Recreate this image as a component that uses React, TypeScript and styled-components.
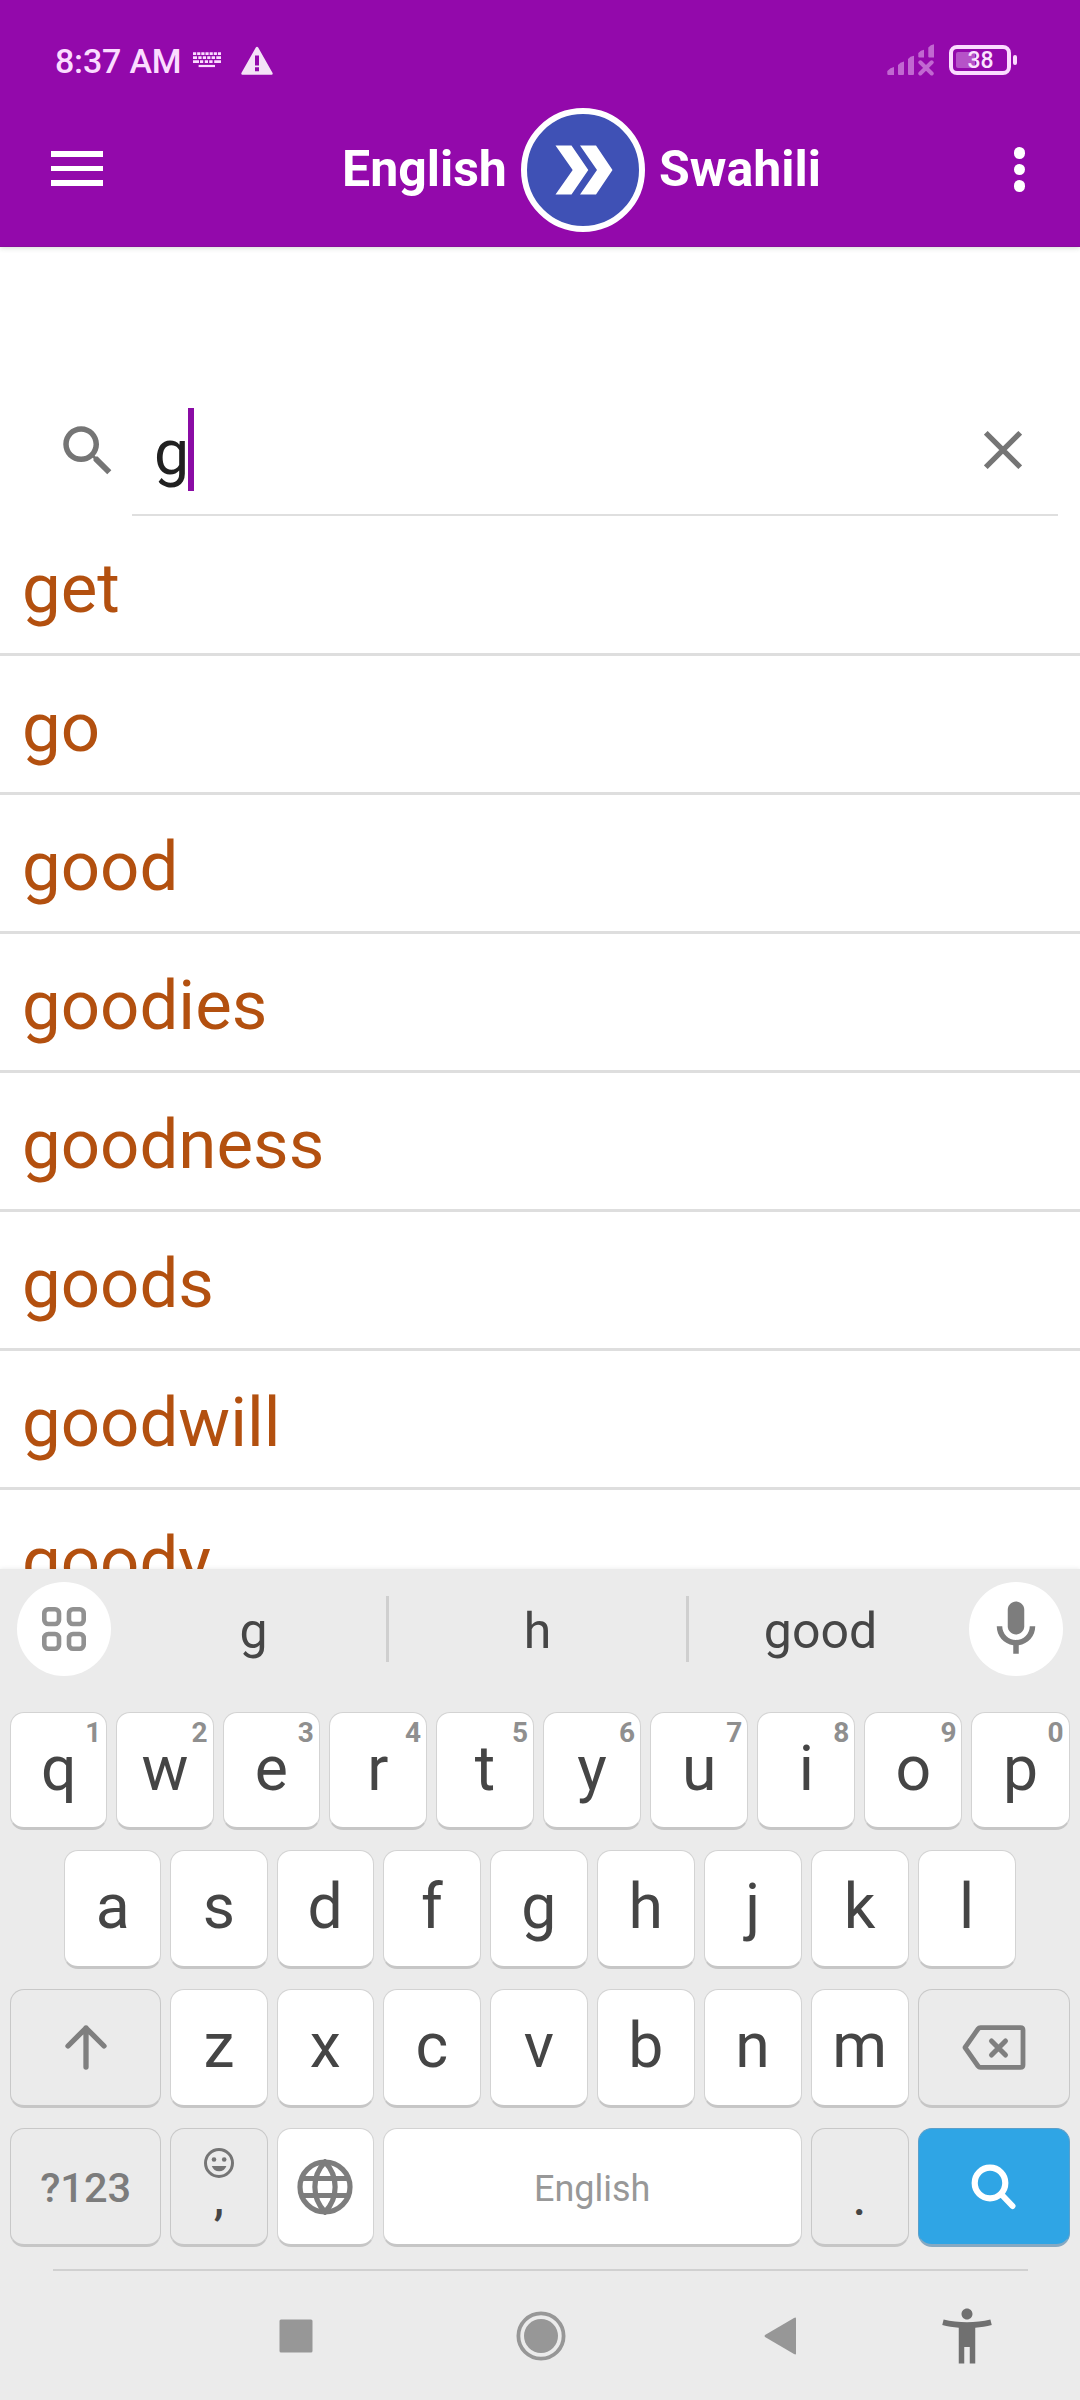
import React from "react";
import styled, { createGlobalStyle } from "styled-components";

const GlobalStyle = createGlobalStyle`
  *, *::before, *::after { box-sizing: border-box; }
  html, body { margin: 0; padding: 0; background: #fff; }
  body { font-family: Roboto, "Liberation Sans", sans-serif; overflow: hidden; }
  svg { display: block; flex: none; }
`;

const Screen = styled.div`
  width: 1080px;
  height: 2400px;
  display: flex;
  flex-direction: column;
  background: #fff;
  overflow: hidden;
`;

const Header = styled.header`
  height: 247px;
  flex: none;
  background: #9309ab;
  border-bottom: 1px solid #870f9b;
  box-shadow: 0 1px 5px rgba(60, 90, 60, 0.22);
  display: flex;
  flex-direction: column;
`;

const StatusBar = styled.div`
  height: 93px;
  padding: 29px 63px 0 55px;
  display: flex;
  align-items: flex-start;
  justify-content: space-between;
`;

const StatusGroup = styled.div`
  height: 62px;
  display: flex;
  align-items: center;
`;

const Clock = styled.span`
  width: 138px;
  padding-top: 2px;
  font-size: 34px;
  font-weight: 500;
  line-height: 62px;
  color: #fbdcff;
  white-space: nowrap;
  letter-spacing: -0.2px;
`;

const BatteryShell = styled.div`
  position: relative;
  width: 62px;
  height: 30px;
  margin-left: 14px;
  border: 4px solid #fbdcff;
  border-radius: 8px;
  padding: 3px;
`;

const BatteryFill = styled.div`
  width: 19px;
  height: 16px;
  border-radius: 2px;
  background: #b653c8;
`;

const BatteryValue = styled.span`
  position: absolute;
  inset: 0;
  padding-left: 1px;
  font-size: 23px;
  font-weight: 500;
  line-height: 24px;
  text-align: center;
  color: #fbe4ff;
`;

const BatteryNub = styled.div`
  width: 4px;
  height: 10px;
  margin-left: 2px;
  border-radius: 2px;
  background: #fbdcff;
`;

const Toolbar = styled.div`
  height: 153px;
  padding: 0 55px 0 51px;
  display: flex;
  align-items: center;
`;

const MenuButton = styled.div`
  width: 290px;
  margin-bottom: 2px;
  display: flex;
  flex-direction: column;
  gap: 9px;
`;

const MenuLine = styled.div`
  width: 52px;
  height: 5.6px;
  background: #fff;
`;

const Direction = styled.div`
  display: flex;
  align-items: center;
  flex: 1;
`;

const Language = styled.span<{ $indent?: number }>`
  width: 180px;
  padding: 0 0 2px ${(p) => p.$indent ?? 0}px;
  font-size: 50px;
  font-weight: 700;
  line-height: 60px;
  color: #fff;
  white-space: nowrap;
`;

const SwapButton = styled.div`
  width: 124px;
  height: 124px;
  margin-right: 14px;
  border: 6px solid #fff;
  border-radius: 50%;
  background: #3f51b5;
  display: flex;
  align-items: center;
  justify-content: center;
`;

const MoreButton = styled.div`
  display: flex;
  flex-direction: column;
  gap: 5px;
`;

const Dot = styled.div`
  width: 11.5px;
  height: 11.5px;
  border-radius: 50%;
  background: #fff;
`;

const Content = styled.main`
  height: 1322px;
  flex: none;
  overflow: hidden;
  display: flex;
  flex-direction: column;
`;

const SearchRow = styled.div`
  flex: none;
  height: 270px;
  padding: 134px 22px 0 55px;
  display: flex;
`;

const SearchIconBox = styled.div`
  width: 77px;
  padding-top: 37px;
`;

const SearchField = styled.div`
  flex: 1;
  height: 135px;
  border-bottom: 2px solid #dfdfdf;
  padding: 27px 36px 0 22px;
  display: flex;
  align-items: flex-start;
`;

const Query = styled.span`
  width: 34px;
  font-size: 62.5px;
  line-height: 90px;
  color: #212121;
`;

const Caret = styled.div`
  width: 6px;
  height: 83px;
  background: #8a0ca5;
`;

const ClearButton = styled.div`
  margin: 23px 0 0 auto;
`;

const WordList = styled.ul`
  list-style: none;
  margin: 0;
  padding: 0;
`;

const Word = styled.li`
  height: 139px;
  padding: 7px 22px 0;
  border-bottom: 3px solid #dedede;
  font-size: 69px;
  line-height: 129px;
  color: #b3500f;
`;

const Keyboard = styled.section`
  position: relative;
  height: 831px;
  flex: none;
  background: #ebebeb;
  box-shadow: 0 0 5px rgba(0, 0, 0, 0.09);
`;

const SuggestionBar = styled.div`
  height: 143px;
  padding: 13px 17px 0 17px;
  display: flex;
  align-items: flex-start;
`;

const RoundButton = styled.div`
  width: 94px;
  height: 94px;
  border-radius: 50%;
  background: #fff;
  display: flex;
  align-items: center;
  justify-content: center;
`;

const Suggestions = styled.div`
  flex: 1;
  height: 94px;
  padding: 0 17px 0 10px;
  display: grid;
  grid-template-columns: 265px 3px 297px 3px 1fr;
  align-items: center;
`;

const Suggestion = styled.span`
  font-size: 50px;
  line-height: 90px;
  padding-top: 4px;
  text-align: center;
  color: #464646;
`;

const Separator = styled.div`
  height: 66px;
  background: #cfcfcf;
`;

const KeyRows = styled.div`
  height: 535px;
  padding: 0 10.5px 0 10px;
  display: grid;
  grid-template-rows: 118px 119px 119px 119px;
  row-gap: 20px;
`;

const KeyRow = styled.div<{ $inset?: boolean }>`
  padding: 0 ${(p) => (p.$inset ? 54 : 0)}px;
  display: flex;
  gap: 9px;
`;

type KeyTone = "light" | "dim" | "accent";

const keyBackground = { light: "#ffffff", dim: "#ebebeb", accent: "#2fa5e5" };
const keyEdge = { light: "#d3d3d3", dim: "#c8c8c8", accent: "#5b9fca" };
const keyBottom = { light: "#c6c6c6", dim: "#c6c6c6", accent: "#86a9c2" };

const KeyCap = styled.div<{ $tone?: KeyTone; $width?: number }>`
  position: relative;
  ${(p) => (p.$width ? `flex: none; width: ${p.$width}px;` : "flex: 1 1 0; min-width: 0;")}
  border: 1px solid ${(p) => keyEdge[p.$tone ?? "light"]};
  border-bottom: 3px solid ${(p) => keyBottom[p.$tone ?? "light"]};
  border-radius: 14px;
  background: ${(p) => keyBackground[p.$tone ?? "light"]};
  display: flex;
  align-items: center;
  justify-content: center;
`;

const Letter = styled.span`
  font-size: 62.5px;
  line-height: 110px;
  padding-bottom: 3px;
  color: #454545;
`;

const Hint = styled.span`
  position: absolute;
  top: 4px;
  right: 5px;
  font-size: 28px;
  font-weight: 700;
  line-height: 32px;
  color: #8f8f8f;
`;

const SymbolLabel = styled.span`
  font-size: 41.5px;
  font-weight: 500;
  line-height: 110px;
  padding-top: 2px;
  color: #7c7c7c;
`;

const SpaceLabel = styled.span`
  font-size: 36px;
  line-height: 110px;
  padding-top: 4px;
  color: #989898;
`;

const EmojiStack = styled.div`
  align-self: stretch;
  display: flex;
  flex-direction: column;
  align-items: center;
  padding-top: 18px;
`;

const Punctuation = styled.span<{ $top: number }>`
  height: 36px;
  margin-top: ${(p) => p.$top}px;
  font-size: 46px;
  font-weight: 500;
  line-height: 36px;
  color: #454545;
`;

const NavBar = styled.nav`
  margin: 22px 52px 0 53px;
  height: 131px;
  border-top: 2px solid #d0d0d0;
`;

const NavItems = styled.div`
  height: 129px;
  padding: 0 0 0 226px;
  display: flex;
  align-items: center;
`;

const NavSlot = styled.div<{ $width: number }>`
  flex: none;
  width: ${(p) => p.$width}px;
`;

const KeyboardStatusIcon = () => (
  <svg width="28" height="16" viewBox="0 0 28 16" stroke="#fbdcff" strokeWidth="2.6" fill="none">
    <path d="M0 1.6H28" strokeDasharray="3.2 0.95" />
    <path d="M0 5.6H4M5.3 5.6H8.6M9.8 5.6H13M14.2 5.6H17.4M18.6 5.6H22M23.3 5.6H28" />
    <path d="M0 9.6H6M7 9.6H10.2M11.8 9.6H15M16.2 9.6H19.6M21.2 9.6H28" />
    <path d="M5.6 14H22" strokeWidth="2.2" />
  </svg>
);

const WarningSlot = styled.div`
  margin: 1px 0 0 20px;
`;

const WarningIcon = () => (
  <svg width="32" height="30" viewBox="0 0 32 30">
    <path
      fill="#f4e2f7"
      fillRule="evenodd"
      d="M14.8 1.5Q16 -.2 17.2 1.5L31.6 27Q32 28.7 30.6 28.8H1.4Q0 28.7.4 27ZM14 9.5V19.4H18V9.5ZM14 21.3V25.3H18V21.3Z"
    />
  </svg>
);

const SignalIcon = () => (
  <svg width="48" height="32" viewBox="0 0 48 32" fill="#c168d1">
    <path d="M.3 27Q3.5 23.3 7 23V31H1.3Q.3 31 .3 30Z" />
    <path d="M11 21Q13 18.2 17 17.5V30Q17 31 16 31H12Q11 31 11 30Z" />
    <path d="M21 15Q23 12.3 27 11.8V30Q27 31 26 31H22Q21 31 21 30Z" />
    <path d="M31.3 9Q33.5 6.3 37 5.8V13.5H32.3Q31.3 13.5 31.3 12.5Z" />
    <path d="M41.3 3.5Q43.5 .8 47 .3V13.5H42.3Q41.3 13.5 41.3 12.5Z" />
    <path d="M33.3 18.3L44.7 29.5M44.7 18.3L33.3 29.5" stroke="#c168d1" strokeWidth="4" strokeLinecap="round" />
  </svg>
);

const ChevronsIcon = () => (
  <svg width="60" height="50" viewBox="-2 0 60 50" fill="#fff">
    <path d="M.5 .5H16.5L33.3 25L16.5 49.5H.5L17.7 25Z" />
    <path d="M25 .5H41L57.5 25L41 49.5H25L42 25Z" />
  </svg>
);

const MagnifierIcon = () => (
  <svg width="66" height="66" viewBox="0 0 24 24" fill="#757575">
    <path d="M15.5 14h-.79l-.28-.27C15.41 12.59 16 11.11 16 9.5 16 5.91 13.09 3 9.5 3S3 5.91 3 9.5 5.91 16 9.5 16c1.61 0 3.09-.59 4.23-1.57l.27.28v.79l5 4.99L20.49 19l-4.99-5zm-6 0C7.01 14 5 11.99 5 9.5S7.01 5 9.5 5 14 7.01 14 9.5 11.99 14 9.5 14z" />
  </svg>
);

const ClearIcon = () => (
  <svg width="38" height="38" viewBox="0 0 38 38" stroke="#757575" strokeWidth="5.2">
    <path d="M1.8 1.8L36.2 36.2M36.2 1.8L1.8 36.2" />
  </svg>
);

const GridIcon = () => (
  <svg width="44" height="44" viewBox="0 0 44 44" fill="none" stroke="#919191" strokeWidth="4.6">
    <rect x="2.3" y="2.3" width="14.7" height="14.7" rx="4" />
    <rect x="27" y="2.3" width="14.7" height="14.7" rx="4" />
    <rect x="2.3" y="27" width="14.7" height="14.7" rx="4" />
    <rect x="27" y="27" width="14.7" height="14.7" rx="4" />
  </svg>
);

const MicIcon = () => (
  <svg width="66" height="66" viewBox="0 0 24 24" fill="#7d7d7d">
    <path d="M12 14c1.66 0 3-1.34 3-3V5c0-1.66-1.34-3-3-3S9 3.34 9 5v6c0 1.66 1.34 3 3 3z" />
    <path d="M17 11c0 2.76-2.24 5-5 5s-5-2.24-5-5H5c0 3.53 2.61 6.43 6 6.92V21h2v-3.08c3.39-.49 6-3.39 6-6.92h-2z" />
  </svg>
);

const ShiftIcon = () => (
  <svg width="42" height="45" viewBox="0 0 42 45" fill="none" stroke="#7f7f7f" strokeWidth="5.3" strokeLinecap="round" strokeLinejoin="round">
    <path d="M21 3V42M3 21L21 3L39 21" />
  </svg>
);

const BackspaceIcon = () => (
  <svg width="64" height="45" viewBox="0 0 64 45" fill="none" stroke="#7f7f7f" strokeWidth="4.8" strokeLinecap="round" strokeLinejoin="round">
    <path d="M18.5 2.6H58.5Q61 2.6 61 5V40Q61 42.4 58.5 42.4H18.5Q17 42.4 16 41L3 22.5L16 4Q17 2.6 18.5 2.6Z" />
    <path d="M29.5 16L43.5 30M43.5 16L29.5 30" strokeWidth="5" />
  </svg>
);

const EmojiIcon = () => (
  <svg width="32" height="32" viewBox="0 0 32 32">
    <circle cx="16" cy="16" r="13.5" fill="none" stroke="#757575" strokeWidth="3" />
    <circle cx="11" cy="12.5" r="2.3" fill="#757575" />
    <circle cx="21.2" cy="12.5" r="2.3" fill="#757575" />
    <path d="M8.8 19H23.4Q21.5 24.3 16.1 24.3T8.8 19Z" fill="#757575" />
  </svg>
);

const GlobeIcon = () => (
  <svg width="56" height="56" viewBox="0 0 56 56" fill="none" stroke="#7d7d7d" strokeWidth="5.2">
    <circle cx="28" cy="28" r="25" />
    <path d="M28 3C14.5 17 14.5 39 28 53C41.5 39 41.5 17 28 3Z" />
    <path d="M4.5 19.5H51.5M4.5 36.5H51.5" />
  </svg>
);

const SearchKeyIcon = () => (
  <svg width="46" height="46" viewBox="0 0 46 46" fill="none" stroke="#fff" strokeWidth="6.2" strokeLinecap="round">
    <circle cx="19" cy="19" r="15.3" />
    <path d="M30.5 30.5L41.5 42" strokeWidth="6" />
  </svg>
);

const RecentsIcon = () => (
  <svg width="34" height="34" viewBox="0 0 34 34">
    <rect x="0.5" y="0.5" width="33" height="33" rx="1.5" fill="#979797" />
  </svg>
);

const HomeIcon = () => (
  <svg width="50" height="50" viewBox="0 0 50 50">
    <circle cx="25" cy="25" r="22.6" fill="none" stroke="#979797" strokeWidth="3.8" />
    <circle cx="25" cy="25" r="17" fill="#979797" />
  </svg>
);

const BackIcon = () => (
  <svg width="32" height="38" viewBox="0 0 32 38" fill="#979797">
    <path d="M1 18Q0 19 1 20L30 37Q32 38 32 36.5V1.5Q32 0 30 1Z" />
  </svg>
);

const AccessibilityIcon = () => (
  <svg width="66" height="66" viewBox="0 0 24 24" fill="#707070">
    <path d="M20.5 6c-2.61.7-5.67 1-8.5 1s-5.89-.3-8.5-1L3 8c1.86.5 4 .83 6 1v13h2v-6h2v6h2V9c2-.17 4.14-.5 6-1l-.5-2zM12 6c1.1 0 2-.9 2-2s-.9-2-2-2-2 .9-2 2 .9 2 2 2z" />
  </svg>
);

const words = ["get", "go", "good", "goodies", "goodness", "goods", "goodwill", "goody"];
const topRow = "qwertyuiop".split("");
const homeRow = "asdfghjkl".split("");
const bottomRow = "zxcvbnm".split("");

/* The leftmost letter columns are a hair narrower than the rest. */
const NARROW = 97.3;
const WIDE = 151.3;

export default function App() {
  return (
    <Screen>
      <GlobalStyle />
      <Header>
        <StatusBar>
          <StatusGroup>
            <Clock>8:37 AM</Clock>
            <KeyboardStatusIcon />
            <WarningSlot>
              <WarningIcon />
            </WarningSlot>
          </StatusGroup>
          <StatusGroup>
            <SignalIcon />
            <BatteryShell>
              <BatteryFill />
              <BatteryValue>38</BatteryValue>
            </BatteryShell>
            <BatteryNub />
          </StatusGroup>
        </StatusBar>
        <Toolbar>
          <MenuButton>
            <MenuLine />
            <MenuLine />
            <MenuLine />
          </MenuButton>
          <Direction>
            <Language $indent={1}>English</Language>
            <SwapButton>
              <ChevronsIcon />
            </SwapButton>
            <Language>Swahili</Language>
          </Direction>
          <MoreButton>
            <Dot />
            <Dot />
            <Dot />
          </MoreButton>
        </Toolbar>
      </Header>

      <Content>
        <SearchRow>
          <SearchIconBox>
            <MagnifierIcon />
          </SearchIconBox>
          <SearchField>
            <Query>g</Query>
            <Caret />
            <ClearButton>
              <ClearIcon />
            </ClearButton>
          </SearchField>
        </SearchRow>
        <WordList>
          {words.map((word) => (
            <Word key={word}>{word}</Word>
          ))}
        </WordList>
      </Content>

      <Keyboard>
        <SuggestionBar>
          <RoundButton>
            <GridIcon />
          </RoundButton>
          <Suggestions>
            <Suggestion>g</Suggestion>
            <Separator />
            <Suggestion>h</Suggestion>
            <Separator />
            <Suggestion>good</Suggestion>
          </Suggestions>
          <RoundButton>
            <MicIcon />
          </RoundButton>
        </SuggestionBar>
        <KeyRows>
          <KeyRow>
            {topRow.map((letter, i) => (
              <KeyCap key={letter} $width={i < 3 ? NARROW : undefined}>
                <Letter>{letter}</Letter>
                <Hint>{(i + 1) % 10}</Hint>
              </KeyCap>
            ))}
          </KeyRow>
          <KeyRow $inset>
            {homeRow.map((letter, i) => (
              <KeyCap key={letter} $width={i < 3 ? NARROW : undefined}>
                <Letter>{letter}</Letter>
              </KeyCap>
            ))}
          </KeyRow>
          <KeyRow>
            <KeyCap $tone="dim" $width={WIDE}>
              <ShiftIcon />
            </KeyCap>
            {bottomRow.map((letter, i) => (
              <KeyCap key={letter} $width={i < 2 ? NARROW : undefined}>
                <Letter>{letter}</Letter>
              </KeyCap>
            ))}
            <KeyCap $tone="dim" $width={152}>
              <BackspaceIcon />
            </KeyCap>
          </KeyRow>
          <KeyRow>
            <KeyCap $tone="dim" $width={WIDE}>
              <SymbolLabel>?123</SymbolLabel>
            </KeyCap>
            <KeyCap $tone="dim" $width={NARROW}>
              <EmojiStack>
                <EmojiIcon />
                <Punctuation $top={1}>,</Punctuation>
              </EmojiStack>
            </KeyCap>
            <KeyCap $width={NARROW}>
              <GlobeIcon />
            </KeyCap>
            <KeyCap>
              <SpaceLabel>English</SpaceLabel>
            </KeyCap>
            <KeyCap $tone="dim" $width={98}>
              <Punctuation $top={24}>.</Punctuation>
            </KeyCap>
            <KeyCap $tone="accent" $width={152}>
              <SearchKeyIcon />
            </KeyCap>
          </KeyRow>
        </KeyRows>
        <NavBar>
          <NavItems>
            <NavSlot $width={237}>
              <RecentsIcon />
            </NavSlot>
            <NavSlot $width={248}>
              <HomeIcon />
            </NavSlot>
            <NavSlot $width={170}>
              <BackIcon />
            </NavSlot>
            <AccessibilityIcon />
          </NavItems>
        </NavBar>
      </Keyboard>
    </Screen>
  );
}
